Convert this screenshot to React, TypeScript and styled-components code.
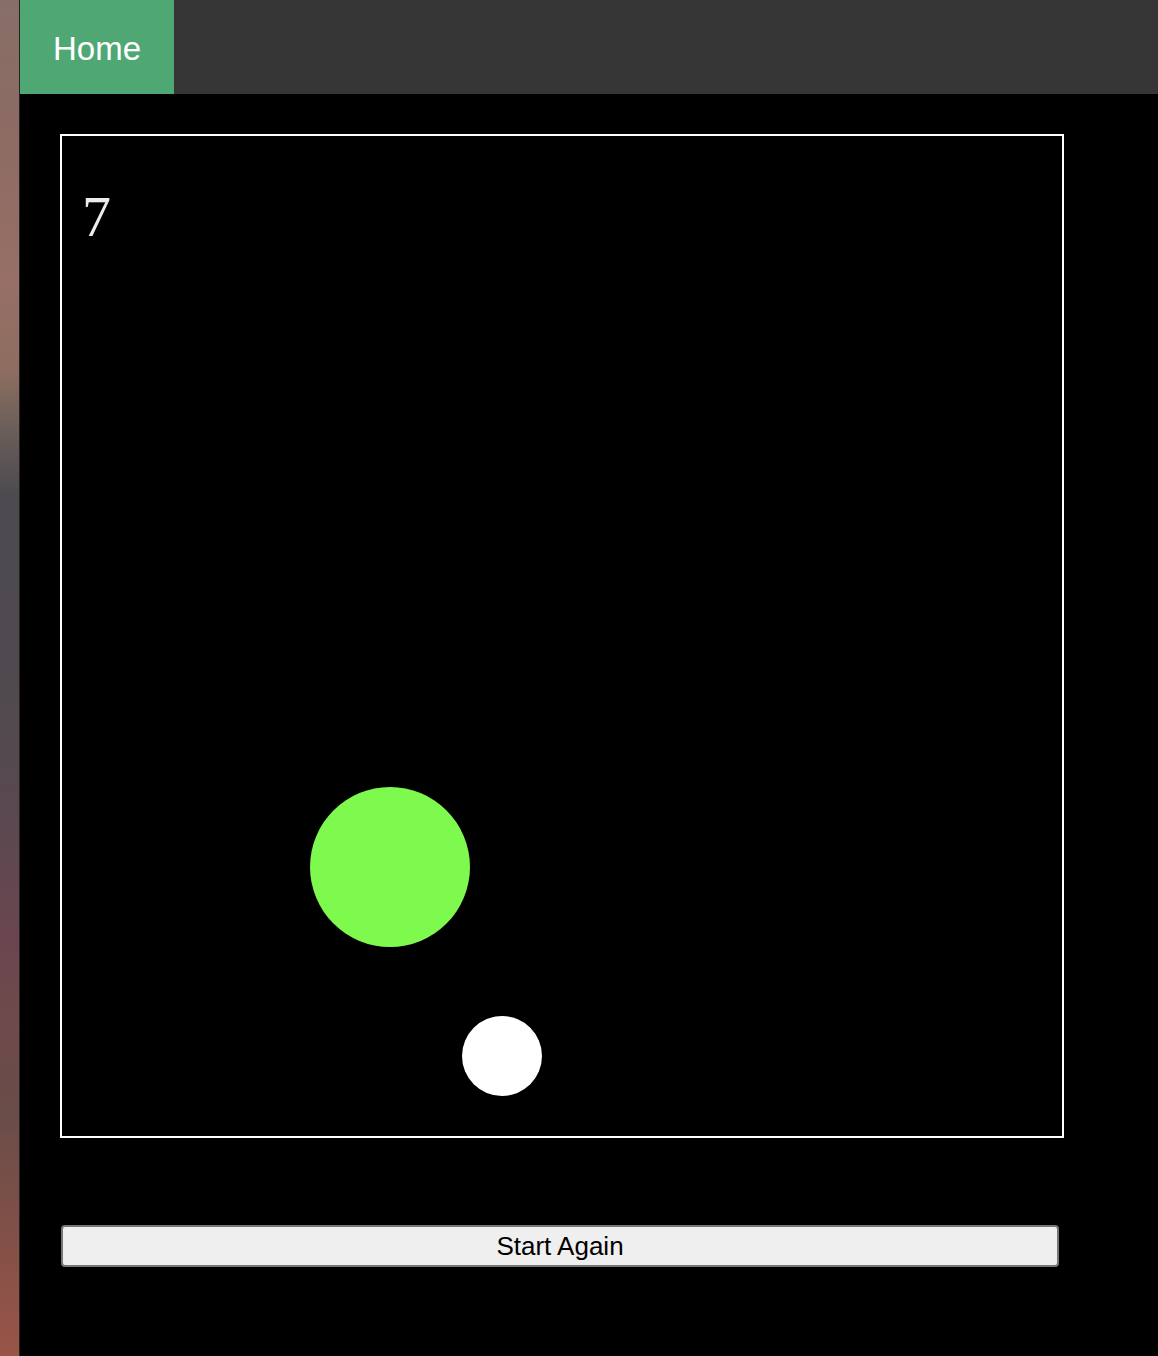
import React from "react";
import styled, { createGlobalStyle } from "styled-components";

const colors = {
  nav: "#363636",
  green: "#4fa874",
  ball: "#7ef94e",
  white: "#ffffff",
  score: "#ececec",
  black: "#000000",
  button: "#efefef",
  buttonBorder: "#767676",
};

const GlobalStyle = createGlobalStyle`
  html, body {
    margin: 0;
    padding: 0;
    background: ${colors.black};
  }
  #root {
    min-height: 1356px;
  }
`;

const Screen = styled.div`
  display: flex;
  min-height: 1356px;
`;

// blurred desktop peeking out on the left edge
const Desktop = styled.div`
  width: 19px;
  flex-shrink: 0;
  border-right: 1px solid #262222;
  background: linear-gradient(
    to bottom,
    #876f67 0px,
    #8b6b63 120px,
    #976f66 280px,
    #8e6e60 370px,
    #6a5e5a 430px,
    #4d4a50 495px,
    #4e4a50 630px,
    #524a4f 730px,
    #5c4850 830px,
    #694650 930px,
    #6e4a4c 1010px,
    #6a4c48 1110px,
    #805048 1230px,
    #9a5448 1356px
  );
`;

const Page = styled.div`
  flex: 1;
  display: flex;
  flex-direction: column;
  background: ${colors.black};
  font-family: "Liberation Sans", Arial, sans-serif;
`;

const NavBar = styled.nav`
  display: flex;
  height: 94px;
  background: ${colors.nav};
`;

const NavLink = styled.a`
  display: flex;
  align-items: center;
  padding: 3px 33px 0;
  background: ${colors.green};
  color: ${colors.white};
  font-size: 33px;
  text-decoration: none;
  cursor: pointer;
`;

const Main = styled.main`
  display: flex;
  flex-direction: column;
  padding: 40px 0 0 40px;
`;

const GameBoard = styled.div`
  width: 1000px;
  height: 1000px;
  border: 2px solid ${colors.white};
  background: ${colors.black};
`;

const Controls = styled.div`
  margin-top: 87px;
  padding-left: 1px;
`;

const StartButton = styled.button`
  width: 998px;
  height: 42px;
  background: ${colors.button};
  border: 2px solid ${colors.buttonBorder};
  border-radius: 4px;
  font-family: "Liberation Sans", Arial, sans-serif;
  font-size: 26px;
  color: ${colors.black};
  cursor: pointer;
  padding: 0;
`;

const score = 7;
const target = { x: 328, y: 731, r: 80 };
const player = { x: 440, y: 920, r: 40 };

export default function App() {
  return (
    <>
      <GlobalStyle />
      <Screen>
        <Desktop />
        <Page>
          <NavBar>
            <NavLink>Home</NavLink>
          </NavBar>
          <Main>
            <GameBoard>
              <svg width="1000" height="1000" viewBox="0 0 1000 1000">
                <text
                  x="20"
                  y="100"
                  fill={colors.score}
                  fontFamily="'Liberation Serif', 'Times New Roman', serif"
                  fontSize="58"
                >
                  {score}
                </text>
                <circle cx={target.x} cy={target.y} r={target.r} fill={colors.ball} />
                <circle cx={player.x} cy={player.y} r={player.r} fill={colors.white} />
              </svg>
            </GameBoard>
            <Controls>
              <StartButton>Start Again</StartButton>
            </Controls>
          </Main>
        </Page>
      </Screen>
    </>
  );
}
